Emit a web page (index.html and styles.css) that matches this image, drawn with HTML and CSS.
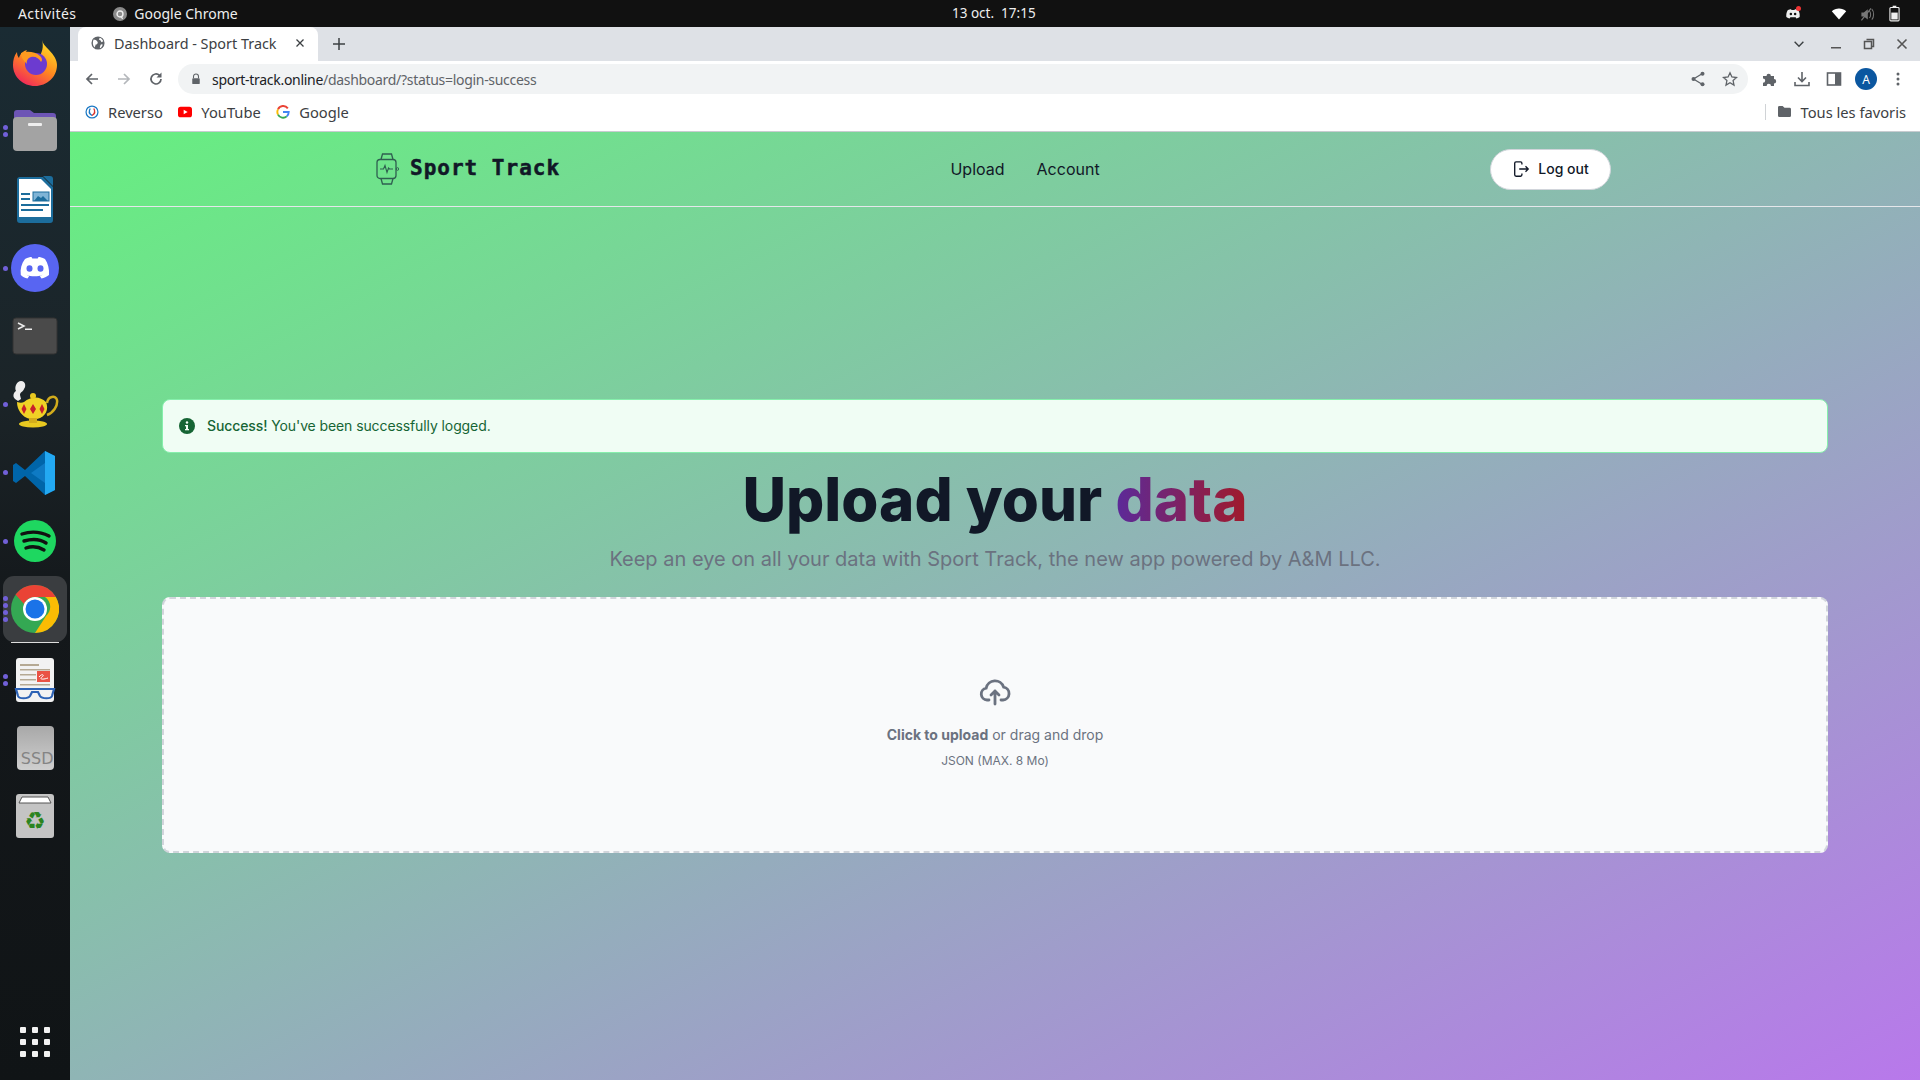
FILE: index.html
```html
<!DOCTYPE html>
<html lang="fr">
	<head>
		<meta charset="utf-8">
		<title>Dashboard - Sport Track</title>
		<link rel="stylesheet" href="styles.css">
	</head>
	<body>
		<div class="top-bar">
			<div class="top-left">
				<span class="activities">Activités</span>
				<span class="app-name">
					<svg class="app-icon" viewBox="0 0 16 16"><circle cx="8" cy="8" r="8" fill="#8a8a8a"/><circle cx="8" cy="8" r="3.400" fill="none" stroke="#eee" stroke-width="1.600"/><path d="M9 10.500l2 3" stroke="#eee" stroke-width="1.400"/></svg>
					Google Chrome
				</span>
			</div>
			<span class="clock">13 oct.&nbsp; 17:15</span>
			<div class="tray">
				<span class="tray-discord">
					<svg class="tray-icon" viewBox="0 0 24 24"><path fill="#eee" d="M4 6.500C6 5.300 8 5 9.200 5l.5 1.100h4.600L14.800 5c1.200 0 3.200.3 5.200 1.500 1.600 2.800 2.400 6 2 10-1.600 1.300-3.400 2-5 2.200l-1-1.700H8l-1 1.700c-1.600-.2-3.400-.9-5-2.200-.4-4 .4-7.200 2-10z"/><circle cx="8.800" cy="12" r="1.900" fill="#111"/><circle cx="15.200" cy="12" r="1.900" fill="#111"/></svg>
					<span class="tray-badge"></span>
				</span>
				<svg class="tray-icon tray-wifi" viewBox="0 0 20 16"><path fill="#fff" d="M10 15L1 4.500C3.500 2.300 6.500 1 10 1s6.500 1.300 9 3.500z"/></svg>
				<svg class="tray-icon tray-sound" viewBox="0 0 20 20"><path fill="#777" d="M3 8h3l5-4v13l-5-4H3z"/><path d="M13 6c2 2 2 7 0 9M16 4c3 3 3 10 0 13" fill="none" stroke="#777" stroke-width="1.300"/><path d="M3 18L15 3" stroke="#777" stroke-width="1.500"/></svg>
				<svg class="tray-battery" viewBox="0 0 12 18"><path fill="none" stroke="#eee" stroke-width="1.200" d="M2 2.500h8a1 1 0 0 1 1 1V16a1 1 0 0 1-1 1H2a1 1 0 0 1-1-1V3.500a1 1 0 0 1 1-1z"/><rect x="4" y=".5" width="4" height="2" fill="#eee"/><rect x="2.500" y="8" width="7" height="7.500" fill="#eee"/></svg>
			</div>
		</div>

		<div class="desktop">
			<aside class="dock">
				<div class="dock-item">
					<svg class="dock-icon" viewBox="0 0 48 48">
						<defs>
							<linearGradient id="fx" x1="0.800" y1="0" x2="0.200" y2="1"><stop offset="0" stop-color="#ffe226"/><stop offset="0.500" stop-color="#ff8a1f"/><stop offset="1" stop-color="#f0205f"/></linearGradient>
						</defs>
						<path fill="url(#fx)" d="M31 1c1 4 3 6 7 10 5 5 8 10 8 15 0 12-10 21-22 21S2 38 2 26c0-5 1-9 4-13 0 3 1 5 2 6 1-4 4-7 8-8-2 3-2 4-1 5 5-1 10 0 13 3 3-6 5-11 3-18z"/>
						<circle cx="25" cy="25" r="11" fill="#6c3bd0"/>
						<path fill="#ff9a1f" d="M10 14c5-2 14-2 19 3 3 3 2 5 1 6-2-4-6-6-10-5-3 1-5 4-4 7-3-3-6-6-6-11z"/>
					</svg>
				</div>
				<div class="dock-item">
					<span class="dots"><i></i><i></i></span>
					<svg class="dock-icon" viewBox="0 0 48 48">
						<path fill="#6d55b5" d="M3 6a3 3 0 0 1 3-3h13l4 3h19a3 3 0 0 1 3 3v10H3z"/>
						<rect x="2" y="10" width="44" height="34" rx="4" fill="#a3a3a3"/>
						<rect x="17" y="16" width="14" height="3" rx="1" fill="#eee"/>
					</svg>
				</div>
				<div class="dock-item">
					<svg class="dock-icon" viewBox="0 0 48 48">
						<path fill="#1c6d9c" d="M6 1h26l10 10v33a3 3 0 0 1-3 3H9a3 3 0 0 1-3-3V4a3 3 0 0 1 3-3z"/>
						<path fill="#fff" d="M8 3h22l10 10v28H8z"/>
						<path fill="#1c6d9c" d="M32 0l10 10V3a3 3 0 0 0-3-3z"/>
						<rect x="10" y="17" width="9" height="2" fill="#1c6d9c"/><rect x="10" y="22" width="9" height="2" fill="#1c6d9c"/><rect x="10" y="28" width="28" height="2" fill="#1c6d9c"/><rect x="10" y="33" width="22" height="2" fill="#1c6d9c"/>
						<rect x="22" y="16" width="16" height="9" fill="#7fb4d6" stroke="#1c6d9c"/>
						<path d="M23 25l4-5 3 2 2-2 5 5z" fill="#1c6d9c"/>
					</svg>
				</div>
				<div class="dock-item">
					<span class="dots"><i></i></span>
					<svg class="dock-icon" viewBox="0 0 48 48">
						<circle cx="24" cy="24" r="24" fill="#5865f2"/>
						<path fill="#fff" d="M14 15c3-1.500 5-2 6.500-2l.8 1.500h5.400l.8-1.500c1.500 0 3.500.5 6.500 2 3 4.500 4.500 10 4 16-2.500 2-5 3-7.500 3.500l-1.700-2.500c1-.3 2-.8 2.800-1.300-4.500 2-11.700 2-16.200 0 .8.500 1.800 1 2.800 1.300L16.500 34.500C14 34 11.500 33 9.800 31c-.8-6 .7-11.500 4.200-16z"/>
						<ellipse cx="18.500" cy="24.500" rx="3" ry="3.300" fill="#5865f2"/><ellipse cx="29.500" cy="24.500" rx="3" ry="3.300" fill="#5865f2"/>
					</svg>
				</div>
				<div class="dock-item">
					<svg class="dock-icon" viewBox="0 0 48 48">
						<rect x="2" y="6" width="44" height="36" rx="3" fill="#4a4a4a" stroke="#333"/>
						<path d="M7 11l6 3-6 3" fill="none" stroke="#eee" stroke-width="1.500"/><rect x="14" y="16.500" width="7" height="1.500" fill="#eee"/>
					</svg>
				</div>
				<div class="dock-item">
					<span class="dots"><i></i></span>
					<svg class="dock-icon dock-icon-tall" viewBox="0 0 48 55">
						<path fill="#eee" d="M4 22c-3-3-1-7 1-8-2-4 1-10 5-10 5 0 5 6 3 8-1 3-4 3-4 6l1 4-3 2z"/>
						<path fill="none" stroke="#d2ac1c" stroke-width="2.500" d="M36 26c1-7 9-8 10-3 1 6-4 13-10 15"/>
						<path fill="#f0d226" d="M6 25c3 1 5 1 7 0 7-6 16-6 22 0 3 7 0 15-9 17h-7c-8-2-13-9-13-17z"/>
						<circle cx="22" cy="19" r="3" fill="#e8c820"/>
						<path fill="#c8202a" d="M13 27l2.500 5-2.500 5-2.500-5zM22 27l3 5-3 5-3-5zM31 27l2.500 5-2.500 5-2.500-5z"/>
						<ellipse cx="22" cy="47" rx="14" ry="3.500" fill="#e8c820"/>
						<rect x="18" y="41" width="8" height="5" fill="#d2ac1c"/>
					</svg>
				</div>
				<div class="dock-item">
					<span class="dots"><i></i></span>
					<svg class="dock-icon" viewBox="0 0 48 48">
						<path fill="#0065a9" d="M34 2l10 5v34l-10 5-20-19-9 7-3-2v-16l3-2 9 7z"/>
						<path fill="#23a9f2" d="M34 2l10 5v34l-10 5z"/>
						<path fill="#0e7ac4" d="M34 14L20 24l14 10z"/>
					</svg>
				</div>
				<div class="dock-item">
					<span class="dots"><i></i></span>
					<svg class="dock-icon" viewBox="0 0 48 48">
						<circle cx="24" cy="24" r="21" fill="#1ed760"/>
						<path d="M11 17c9-3 19-2 27 2M13 24c7-2 16-2 22 2M15 31c6-2 13-1 18 2" fill="none" stroke="#111" stroke-width="3.400" stroke-linecap="round"/>
					</svg>
				</div>
				<div class="dock-item dock-item-active">
					<span class="dots"><i></i><i></i><i></i><i></i></span>
					<svg class="dock-icon" viewBox="0 0 48 48">
						<circle cx="24" cy="24" r="24" fill="#34a853"/>
						<path fill="#ea4335" d="M24 0a24 24 0 0 1 20.800 12H24a12 12 0 0 0-11 7L4.500 9.500A24 24 0 0 1 24 0z"/>
						<path fill="#fbbc04" d="M44.800 12A24 24 0 0 1 24 48l11-17a12 12 0 0 0-1-19z"/>
						<circle cx="24" cy="24" r="12" fill="#fff"/>
						<circle cx="24" cy="24" r="9.500" fill="#1a73e8"/>
					</svg>
				</div>
				<div class="dock-item">
					<span class="dots"><i></i><i></i></span>
					<svg class="dock-icon" viewBox="0 0 48 48">
						<rect x="5" y="2" width="38" height="44" rx="3" fill="#f2f2f2"/>
						<rect x="9" y="8" width="19" height="2" fill="#b5a993"/><rect x="9" y="13" width="30" height="1.500" fill="#b5a993"/><rect x="9" y="18" width="16" height="1.500" fill="#b5a993"/><rect x="9" y="23" width="16" height="1.500" fill="#b5a993"/><rect x="9" y="28" width="30" height="1.500" fill="#b5a993"/>
						<rect x="26" y="15" width="13" height="11" fill="#ea5345"/>
						<path d="M28 21c3-4 6-2 3 0s0 3 6 1" fill="none" stroke="#fff"/>
						<path d="M5 33h38l-2 7c-1 3-10 3-12 0l-2-4h-6l-2 4c-2 3-11 3-12 0z" fill="#f2f2f2" stroke="#2c62b5" stroke-width="2.200"/>
					</svg>
				</div>
				<div class="dock-item">
					<div class="ssd-icon">SSD</div>
				</div>
				<div class="dock-item">
					<svg class="dock-icon" viewBox="0 0 48 48">
						<rect x="5" y="2" width="38" height="44" rx="3" fill="#c4c4c4"/>
						<path fill="#fff" stroke="#555" d="M8 11l3-6h26l3 6z"/>
						<text class="recycle" x="24" y="37" text-anchor="middle">♻</text>
					</svg>
				</div>
				<div class="dock-item dock-apps">
					<div class="apps-grid"><i></i><i></i><i></i><i></i><i></i><i></i><i></i><i></i><i></i></div>
				</div>
			</aside>

			<div class="browser">
				<div class="tab-strip">
					<div class="tab">
						<svg class="tab-globe" viewBox="0 0 16 16"><circle cx="8" cy="8" r="7.500" fill="#5f6368"/><path fill="#fff" d="M3 4c2 0 3 1 4 2s1 2 0 3-2 0-2 2l-1 2C2 11 1.500 7 3 4zM10 2c2 .5 3 2 4 4l-2 1-1-2-2-1zM11 10l2-1v2l-2 3-1-1z"/></svg>
						<span class="tab-title">Dashboard - Sport Track</span>
						<svg class="tab-close" viewBox="0 0 10 10"><path d="M1.500 1.500l7 7M8.500 1.500l-7 7" stroke="#3c4043" stroke-width="1.300"/></svg>
					</div>
					<svg class="tab-new" viewBox="0 0 12 12"><path d="M6 0v12M0 6h12" stroke="#3c4043" stroke-width="1.500"/></svg>
					<div class="window-buttons">
						<svg class="win-chevron" viewBox="0 0 16 16"><path d="M3 5.500l5 5 5-5" fill="none" stroke="#3c4043" stroke-width="1.600"/></svg>
						<svg class="win-btn" viewBox="0 0 12 12"><rect x="1" y="9" width="10" height="1.500" fill="#555"/></svg>
						<svg class="win-btn" viewBox="0 0 12 12"><path d="M3.500 1.500h7v7h-2M1.500 3.500h7v7h-7z" fill="none" stroke="#555" stroke-width="1.500"/></svg>
						<svg class="win-btn" viewBox="0 0 12 12"><path d="M1.500 1.500l9 9M10.500 1.500l-9 9" stroke="#555" stroke-width="1.600"/></svg>
					</div>
				</div>

				<div class="toolbar">
					<svg class="nav-icon" viewBox="0 0 16 16"><path d="M14 8H3M8 3L3 8l5 5" fill="none" stroke="#5f6368" stroke-width="1.700"/></svg>
					<svg class="nav-icon" viewBox="0 0 16 16"><path d="M2 8h11M8 3l5 5-5 5" fill="none" stroke="#b4b7bb" stroke-width="1.700"/></svg>
					<svg class="nav-icon" viewBox="0 0 16 16"><path d="M13 8a5 5 0 1 1-1.500-3.600" fill="none" stroke="#5f6368" stroke-width="1.700"/><path d="M13.500 1.500v5h-5z" fill="#5f6368"/></svg>
					<div class="omnibox">
						<svg class="lock" viewBox="0 0 12 14"><path d="M3 6V4a3 3 0 0 1 6 0v2" fill="none" stroke="#5f6368" stroke-width="1.300"/><rect x="1.500" y="6" width="9" height="7" rx="1" fill="#5f6368"/></svg>
						<span class="url"><span class="url-host">sport-track.online</span>/dashboard/?status=login-success</span>
						<svg class="omni-icon" viewBox="0 0 16 16"><path d="M12.500 2.500L3.500 8l9 5.500" fill="none" stroke="#5f6368" stroke-width="1.300"/><circle cx="12.500" cy="2.800" r="2" fill="#5f6368"/><circle cx="3.500" cy="8" r="2" fill="#5f6368"/><circle cx="12.500" cy="13.200" r="2" fill="#5f6368"/></svg>
						<svg class="omni-icon" viewBox="0 0 16 16"><path d="M8 1.800l1.900 4.200 4.600.5-3.400 3.100.9 4.500L8 11.800l-4 2.300.9-4.500L1.500 6.500 6.100 6z" fill="none" stroke="#5f6368" stroke-width="1.300"/></svg>
					</div>
					<div class="toolbar-right">
						<svg class="tool-icon" viewBox="0 0 16 16"><path fill="#5f6368" d="M1 5h3.500a2.200 2.200 0 1 1 4.400 0H12v3a2.200 2.200 0 1 1 0 4.400V15H9a2.200 2.200 0 1 0-4.400 0H1v-3.200a2.200 2.200 0 1 0 0-4.400z"/></svg>
						<svg class="tool-icon" viewBox="0 0 16 16"><path d="M8 1v9M4 6.500L8 10.500l4-4M1 11v3.500h14V11" fill="none" stroke="#5f6368" stroke-width="1.600"/></svg>
						<svg class="tool-icon" viewBox="0 0 16 16"><rect x="1.500" y="2" width="13" height="12" fill="none" stroke="#5f6368" stroke-width="1.600"/><rect x="9" y="2" width="5.500" height="12" fill="#5f6368"/></svg>
						<span class="avatar">A</span>
						<svg class="tool-icon" viewBox="0 0 16 16"><circle cx="8" cy="3" r="1.500" fill="#5f6368"/><circle cx="8" cy="8" r="1.500" fill="#5f6368"/><circle cx="8" cy="13" r="1.500" fill="#5f6368"/></svg>
					</div>
				</div>

				<div class="bookmarks">
					<span class="bookmark">
						<svg class="bm-icon" viewBox="0 0 16 16"><circle cx="8" cy="8" r="6.800" fill="#fff" stroke="#1b78c4" stroke-width="1.400"/><path d="M6 4c-2 3-1 6 2 8" fill="none" stroke="#1b78c4" stroke-width="1.500"/><path d="M10 4c2 3 1 6-2 8" fill="none" stroke="#d8342c" stroke-width="1.500"/></svg>
						Reverso
					</span>
					<span class="bookmark">
						<svg class="bm-icon" viewBox="0 0 16 16"><rect x="0" y="2" width="16" height="12" rx="3" fill="#f00"/><path d="M6.500 5.500L11 8l-4.500 2.500z" fill="#fff"/></svg>
						YouTube
					</span>
					<span class="bookmark">
						<svg class="bm-icon" viewBox="0 0 16 16"><path d="M13.500 3.800A6.500 6.500 0 0 0 2.300 5" fill="none" stroke="#ea4335" stroke-width="2.200"/><path d="M2.300 5a6.500 6.500 0 0 0 0 6" fill="none" stroke="#fbbc05" stroke-width="2.200"/><path d="M2.300 11a6.500 6.500 0 0 0 10 2" fill="none" stroke="#34a853" stroke-width="2.200"/><path d="M12.300 13c1.500-1.300 2.200-3 2.200-5H8" fill="none" stroke="#4285f4" stroke-width="2.200"/></svg>
						Google
					</span>
					<span class="bookmark-all">
						<svg class="bm-folder" viewBox="0 0 16 14"><path fill="#5f6368" d="M1 2.500A1.500 1.500 0 0 1 2.500 1H6l2 2h5.500A1.500 1.500 0 0 1 15 4.500v7a1.500 1.500 0 0 1-1.500 1.500h-11A1.500 1.500 0 0 1 1 11.500z"/></svg>
						Tous les favoris
					</span>
				</div>

				<div class="page">
					<header class="site-header">
						<div class="site-header-inner">
							<a class="logo">
								<svg class="logo-icon" viewBox="0 0 24 32"><path d="M6 6.500l1.500-5.500h9L18 6.500M6 25.500L7.500 31h9l1.500-5.500" fill="none" stroke="#2f5f50" stroke-width="1.300"/><rect x="2" y="6.500" width="19" height="19" rx="3" fill="none" stroke="#2f5f50" stroke-width="1.300"/><circle cx="22.500" cy="16" r="1.300" fill="none" stroke="#2f5f50"/><path d="M5 16h3.500l1.500-3.500 2 7 1.500-4.500 1 1h3.500" fill="none" stroke="#2f5f50" stroke-width="1.100"/></svg>
								<span class="logo-text">Sport Track</span>
							</a>
							<nav class="site-nav">
								<a>Upload</a>
								<a>Account</a>
							</nav>
							<button class="logout">
								<svg class="logout-icon" viewBox="0 0 20 20"><path d="M11 5V3.500A1.500 1.500 0 0 0 9.500 2h-5A1.500 1.500 0 0 0 3 3.500v13A1.500 1.500 0 0 0 4.500 18h5a1.500 1.500 0 0 0 1.500-1.500V15M8 10h10M15 7l3 3-3 3" fill="none" stroke="#111827" stroke-width="1.500"/></svg>
								Log out
							</button>
						</div>
					</header>

					<main class="content">
						<div class="alert">
							<svg class="alert-icon" viewBox="0 0 20 20"><circle cx="10" cy="10" r="8" fill="#166534"/><rect x="9" y="9" width="2" height="5" fill="#f0fdf4"/><rect x="8" y="9" width="2" height="1.300" fill="#f0fdf4"/><rect x="8" y="13" width="4" height="1.300" fill="#f0fdf4"/><circle cx="10" cy="6.500" r="1.200" fill="#f0fdf4"/></svg>
							<span class="alert-text"><b>Success!</b> You've been successfully logged.</span>
						</div>
						<h1 class="title">Upload your <span class="title-accent">data</span></h1>
						<p class="subtitle">Keep an eye on all your data with Sport Track, the new app powered by A&amp;M LLC.</p>
						<label class="dropzone">
							<svg class="upload-icon" viewBox="0 0 32 32"><path d="M10 24H8a6 6 0 0 1-.8-11.900 9 9 0 0 1 17.400-1A6.500 6.500 0 0 1 24 24h-2" fill="none" stroke="#6b7280" stroke-width="2.800" stroke-linecap="round"/><path d="M16 28V15M12 19l4-4 4 4" fill="none" stroke="#6b7280" stroke-width="2.800" stroke-linecap="round" stroke-linejoin="round"/></svg>
							<p class="drop-main"><b>Click to upload</b> or drag and drop</p>
							<p class="drop-sub">JSON (MAX. 8 Mo)</p>
						</label>
					</main>
				</div>
			</div>
		</div>
	</body>
</html>
```

FILE: styles.css
```css
* {
	box-sizing: border-box;
}

html, body {
	height: 100%;
}

body {
	margin: 0;
	display: flex;
	flex-direction: column;
	height: 1080px;
	overflow: hidden;
	font-family: "Noto Sans", sans-serif;
}

.top-bar {
	height: 27px;
	background-color: #111;
	color: #eee;
	font-size: 14px;
	display: flex;
	align-items: center;
	justify-content: space-between;
	padding: 0 20px 0 18px;
	position: relative;
}

.top-left {
	display: flex;
	align-items: center;
	gap: 37px;
}

.activities {
	letter-spacing: 0.400px;
}

.app-name {
	display: flex;
	align-items: center;
	gap: 7px;
}

.app-icon {
	width: 14px;
	height: 14px;
}

.clock {
	position: absolute;
	left: 952px;
	top: 4px;
	font-size: 13.500px;
}

.tray {
	display: flex;
	align-items: center;
}

.tray-discord {
	position: relative;
	display: flex;
	margin-right: 30px;
}

.tray-badge {
	position: absolute;
	top: 0;
	right: 0;
	width: 5px;
	height: 5px;
	border-radius: 50%;
	background-color: #e33;
}

.tray-icon {
	width: 16px;
	height: 16px;
}

.tray-wifi {
	margin-right: 12px;
}

.tray-sound {
	margin-right: 14px;
}

.tray-battery {
	width: 11px;
	height: 17px;
}

.desktop {
	flex: 1;
	display: flex;
	min-height: 0;
}

.dock {
	width: 70px;
	display: flex;
	flex-direction: column;
	align-items: center;
	padding-top: 2px;
	background: linear-gradient(180deg, #1a2b33 0%, #1b2428 35%, #14181b 55%, #101416 100%);
}

.dock-item {
	position: relative;
	width: 64px;
	height: 68.300px;
	flex-shrink: 0;
	display: flex;
	align-items: center;
	justify-content: center;
}

.dock-item-active {
	height: 66px;
	margin: 1px 0 3px;
	background-color: #3a3d40;
	border-radius: 11px;
}

.dock-item-active::after {
	content: "";
	position: absolute;
	left: 8px;
	right: 8px;
	bottom: -1px;
	height: 1px;
	background-color: #ddd;
}

.dock-apps {
	margin-top: auto;
	margin-bottom: 4px;
}

.dock-icon {
	width: 48px;
	height: 48px;
}

.dock-icon-tall {
	height: 55px;
}

.dots {
	position: absolute;
	left: 0;
	top: 0;
	bottom: 0;
	display: flex;
	flex-direction: column;
	justify-content: center;
	gap: 2px;
}

.dots i {
	display: block;
	width: 5px;
	height: 5px;
	border-radius: 50%;
	background-color: #7160d8;
}

.ssd-icon {
	width: 37px;
	height: 44px;
	border-radius: 4px;
	background: linear-gradient(180deg, #a8a8a8, #cfcfcf);
	color: #848484;
	font-size: 16px;
	line-height: 18px;
	padding-top: 24px;
	text-align: right;
	overflow: hidden;
	font-family: "DejaVu Sans", sans-serif;
}

.recycle {
	font-family: "DejaVu Sans", sans-serif;
	font-size: 24px;
	fill: #2c8420;
}

.apps-grid {
	display: grid;
	grid-template-columns: repeat(3, 6px);
	gap: 6px;
}

.apps-grid i {
	display: block;
	width: 6px;
	height: 6px;
	border-radius: 1px;
	background-color: #f2f2f2;
}

.browser {
	flex: 1;
	min-width: 0;
	display: flex;
	flex-direction: column;
}

.tab-strip {
	height: 34px;
	background-color: #dee1e6;
	display: flex;
	align-items: flex-end;
	padding-left: 8px;
}

.tab {
	width: 240px;
	height: 34px;
	background-color: #fff;
	border-radius: 8px 8px 0 0;
	display: flex;
	align-items: center;
	padding: 0 13px 2px 13px;
	gap: 9px;
	color: #3c4043;
	font-size: 14.400px;
}

.tab-globe {
	width: 14px;
	height: 14px;
	flex-shrink: 0;
}

.tab-title {
	flex: 1;
	white-space: nowrap;
}

.tab-close {
	width: 10px;
	height: 10px;
}

.tab-new {
	align-self: center;
	margin-left: 15px;
	width: 12px;
	height: 12px;
}

.window-buttons {
	margin-left: auto;
	align-self: center;
	display: flex;
	align-items: center;
	gap: 21px;
	padding-right: 12px;
}

.win-chevron {
	width: 14px;
	height: 14px;
	margin-right: 3px;
}

.win-btn {
	width: 12px;
	height: 12px;
}

.toolbar {
	height: 36px;
	background-color: #fff;
	display: flex;
	align-items: center;
	padding: 0 14px;
	gap: 16px;
}

.nav-icon {
	width: 16px;
	height: 16px;
	flex-shrink: 0;
}

.omnibox {
	flex: 1;
	height: 30px;
	margin: 0 -2px;
	background-color: #f1f3f4;
	border-radius: 15px;
	display: flex;
	align-items: center;
	padding: 0 10px 0 13px;
	gap: 16px;
}

.lock {
	width: 10px;
	height: 12px;
	flex-shrink: 0;
}

.url {
	flex: 1;
	font-size: 14px;
	color: #5f6368;
	margin-left: -5px;
	letter-spacing: -0.300px;
}

.url-host {
	color: #202124;
}

.omni-icon {
	width: 16px;
	height: 16px;
}

.toolbar-right {
	display: flex;
	align-items: center;
	gap: 16px;
}

.tool-icon {
	width: 16px;
	height: 16px;
}

.avatar {
	width: 22px;
	height: 22px;
	margin: 0 -3px;
	border-radius: 50%;
	background-color: #0b57a0;
	color: #fff;
	font-size: 12px;
	display: flex;
	align-items: center;
	justify-content: center;
}

.bookmarks {
	height: 35px;
	background-color: #fff;
	border-bottom: 1px solid #c8ccd0;
	display: flex;
	align-items: center;
	padding: 0 14px 5px 15px;
	gap: 15.500px;
	font-size: 14.700px;
	color: #3c4043;
}

.bookmark {
	display: flex;
	align-items: center;
	gap: 9px;
}

.bm-icon {
	width: 14px;
	height: 14px;
}

.bookmark-all {
	margin-left: auto;
	display: flex;
	align-items: center;
	gap: 9px;
	border-left: 1px solid #d0d3d6;
	padding-left: 11px;
	height: 16px;
}

.bm-folder {
	width: 15px;
	height: 13px;
}

.page {
	flex: 1;
	min-height: 0;
	background: linear-gradient(to bottom right, #66ef80 0%, #8fb5b5 50%, #b878eb 100%);
	font-family: Inter, sans-serif;
}

.site-header {
	height: 75px;
	border-bottom: 1px solid #e5e7eb;
}

.site-header-inner {
	width: 1280px;
	height: 100%;
	margin: 0 auto;
	padding: 0 24px 0 20px;
	display: flex;
	align-items: center;
	justify-content: space-between;
}

.logo {
	display: flex;
	align-items: center;
	gap: 11px;
}

.logo-icon {
	width: 24px;
	height: 32px;
}

.logo-text {
	font-family: "DejaVu Sans Mono", monospace;
	font-weight: bold;
	font-size: 21px;
	letter-spacing: 1px;
	-webkit-text-stroke: 0.500px #111827;
	color: #111827;
	margin-top: -2px;
}

.site-nav {
	display: flex;
	gap: 32px;
	font-size: 16px;
	color: #111827;
}

.logout {
	width: 121px;
	height: 41px;
	background-color: #fff;
	border: 1px solid #d1d5db;
	border-radius: 21px;
	display: flex;
	align-items: center;
	justify-content: center;
	gap: 8px;
	font-family: Inter, sans-serif;
	font-size: 14px;
	font-weight: 500;
	color: #111827;
	padding: 0 0 2px;
}

.logout-icon {
	width: 18px;
	height: 18px;
	margin-top: 2px;
}

.content {
	padding: 192px 92px 0;
	display: flex;
	flex-direction: column;
	align-items: center;
}

.alert {
	width: 100%;
	height: 54px;
	background-color: #f0fdf4;
	border: 1px solid #86efac;
	border-radius: 8px;
	display: flex;
	align-items: center;
	gap: 10px;
	padding: 0 14px;
	font-size: 14px;
	letter-spacing: -0.100px;
	color: #166534;
}

.alert-text {
	margin-top: -1.500px;
}

.alert b {
	font-weight: 500;
}

.alert-icon {
	width: 20px;
	height: 20px;
}

.title {
	margin: 13px 0 0;
	font-size: 60px;
	line-height: 1.100;
	font-weight: 800;
	color: #111827;
}

.title-accent {
	background: linear-gradient(90deg, #5b2a9a, #a11a2a);
	background-clip: text;
	-webkit-background-clip: text;
	color: transparent;
}

.subtitle {
	margin: 13px 0 0;
	font-size: 20px;
	line-height: 28px;
	color: #6b7280;
}

.dropzone {
	width: 100%;
	height: 256px;
	margin-top: 24px;
	padding-bottom: 5px;
	background-color: #f9fafb;
	border: 2px dashed #d1d5db;
	border-radius: 8px;
	display: flex;
	flex-direction: column;
	align-items: center;
	justify-content: center;
	color: #6b7280;
}

.upload-icon {
	width: 32px;
	height: 32px;
}

.drop-main {
	margin: 17px 0 0;
	font-size: 14px;
	line-height: 20px;
}

.drop-sub {
	margin: 8.500px 0 0;
	font-size: 12px;
	line-height: 16px;
}
```
